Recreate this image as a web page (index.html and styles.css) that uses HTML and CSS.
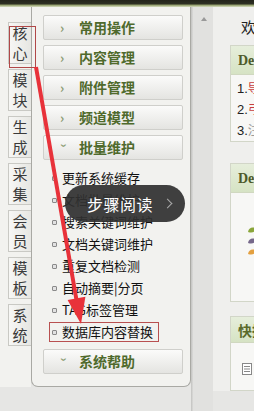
FILE: index.html
```html
<!DOCTYPE html>
<html>
<head>
<meta charset="utf-8">
<link rel="stylesheet" href="styles.css">
</head>
<body>
<div class="topbar"></div>
<div class="main">
  <div class="tabs">
    <div class="tab">核<br>心</div>
    <div class="tab">模<br>块</div>
    <div class="tab">生<br>成</div>
    <div class="tab">采<br>集</div>
    <div class="tab">会<br>员</div>
    <div class="tab">模<br>板</div>
    <div class="tab">系<br>统</div>
  </div>
  <div class="panel">
    <div class="mhead"><span class="arr">›</span>常用操作</div>
    <div class="mhead"><span class="arr">›</span>内容管理</div>
    <div class="mhead"><span class="arr">›</span>附件管理</div>
    <div class="mhead"><span class="arr">›</span>频道模型</div>
    <div class="mhead"><span class="arr down">›</span>批量维护</div>
    <ul class="items">
      <li><span class="dot"></span>更新系统缓存</li>
      <li><span class="dot"></span>文档批量维护</li>
      <li><span class="dot"></span>搜索关键词维护</li>
      <li><span class="dot"></span>文档关键词维护</li>
      <li><span class="dot"></span>重复文档检测</li>
      <li><span class="dot"></span>自动摘要|分页</li>
      <li><span class="dot"></span>TAG标签管理</li>
      <li class="hl"><span class="dot"></span>数据库内容替换</li>
    </ul>
    <div class="mhead"><span class="arr down">›</span>系统帮助</div>
  </div>
  <div class="scroll"><span class="up"></span></div>
  <div class="content">
    <div class="welcome">欢迎使用</div>
    <div class="box box1">
      <div class="bhead">DedeCMS</div>
      <ol class="news">
        <li>1.<span>导</span></li>
        <li>2.<span>弓</span></li>
        <li>3.<span class="g">注</span></li>
      </ol>
    </div>
    <div class="box box2">
      <div class="bhead">DedeCMS</div>
      <div class="bbody">
        <svg class="leaves" width="12" height="30" viewBox="0 0 12 30">
          <path d="M2 6 Q3 0 10 2 Q9 8 2 6Z" fill="#8aa63a"/>
          <path d="M2 17 Q3 11 10 13 Q9 19 2 17Z" fill="#76688a"/>
          <path d="M2 28 Q3 22 10 24 Q9 30 2 28Z" fill="#e3a040"/>
        </svg>
      </div>
    </div>
    <div class="box box3">
      <div class="bhead">快捷</div>
      <div class="bbody">
        <svg class="doc" width="10" height="12" viewBox="0 0 10 12">
          <rect x="0.5" y="0.5" width="9" height="11" fill="#fff" stroke="#888"/>
          <path d="M2 3.5h6M2 6h6M2 8.5h6" stroke="#888"/>
        </svg>
      </div>
    </div>
  </div>
</div>
<div class="mark-tab"></div>
<svg class="arrow" width="254" height="411" viewBox="0 0 254 411">
  <line x1="36" y1="67" x2="76.5" y2="300" stroke="#e8323a" stroke-width="4"/>
  <polygon points="81,324 85.4,296.8 67.6,299.9" fill="#e8323a"/>
</svg>
<div class="reader"><span class="rtext">步骤阅读</span><span class="chev"></span></div>
</body>
</html>
```

FILE: styles.css
```css
* { box-sizing: border-box; }
html, body { margin: 0; padding: 0; }
body {
  width: 254px;
  height: 411px;
  overflow: hidden;
  background: #e6e6e4;
  font-family: "Noto Sans CJK SC", "Liberation Sans", sans-serif;
  position: relative;
}
.topbar {
  height: 7px;
  background: linear-gradient(#23241b 0, #2e3024 4px, #8e9a66 5px, #d6dcc0 7px);
}
.main {
  display: flex;
  height: 404px;
}
.tabs {
  width: 31px;
  padding-top: 15px;
  background: #f2f2ef;
  display: flex;
  flex-direction: column;
  align-items: flex-end;
  height: 380px;
}
.tab {
  width: 23px;
  height: 42px;
  margin-bottom: 5px;
  border: 1px solid #c9c9c4;
  border-right: none;
  background: linear-gradient(90deg, #f7f7f5, #e6e6e2);
  font-size: 15px;
  line-height: 20px;
  text-align: center;
  color: #3a3a3a;
  font-weight: normal;
}
.panel {
  width: 160px;
  height: 380px;
  border: 1px solid #a9a9a4;
  border-top: none;
  border-radius: 0 0 7px 7px;
  background: #f2f2ef;
  padding-top: 8px;
  padding-left: 11px;
}
.mhead {
  width: 140px;
  height: 25px;
  margin-bottom: 5px;
  border: 1px solid #cfcfcb;
  border-radius: 2px;
  background: linear-gradient(#fbfbfa, #e4e4e1);
  font-size: 14px;
  font-weight: bold;
  color: #4f6a2c;
  line-height: 23px;
  padding-left: 16px;
  display: flex;
  align-items: center;
}
.arr {
  display: inline-block;
  width: 19px;
  font-size: 13px;
  color: #8a9a70;
  font-weight: bold;
}
.arr.down { transform: rotate(90deg) translateX(1px); width: 10px; margin-right: 9px; font-size: 12px; }
.items {
  list-style: none;
  margin: 0;
  padding: 2px 0 0 0;
  margin-left: 6px;
  margin-bottom: 7px;
}
.items li {
  height: 22px;
  line-height: 22px;
  font-size: 13px;
  color: #111;
  display: flex;
  align-items: center;
  width: 110px;
  padding-left: 3px;
}
.items li.hl {
  border: 1px solid #b85050;
  height: 20px;
  margin-top: 1px;
  padding-left: 2px;
}
.dot {
  width: 5px;
  height: 5px;
  border: 1px solid #8a8a8a;
  background: #e2e2e2;
  border-radius: 1px;
  margin-right: 5px;
  flex: none;
}
.scroll {
  width: 22px;
  background: linear-gradient(90deg, #c8c8c6 0, #c8c8c6 1px, #e1e1df 2px, #e1e1df 100%);
  height: 404px;
  position: relative;
}
.up {
  position: absolute;
  left: 10px;
  top: 10px;
  width: 0;
  height: 0;
  border-left: 3px solid transparent;
  border-right: 3px solid transparent;
  border-bottom: 4px solid #999;
}
.content {
  flex: 1;
  background: #efefed;
  padding-top: 10px;
  padding-left: 17px;
  overflow: hidden;
  height: 384px;
}
.welcome {
  height: 20px;
  line-height: 20px;
  font-size: 15px;
  padding-left: 11px;
  white-space: nowrap;
  color: #222;
}
.box {
  width: 60px;
  border: 1px solid #d2d6c8;
  border-right: none;
  background: #f7f7f5;
}
.box1 { margin-top: 8px; height: 97px; }
.box2 { margin-top: 21px; height: 139px; }
.box3 { margin-top: 14px; height: 75px; }
.bhead {
  height: 29px;
  background: linear-gradient(#e6eedb, #d6e3c4);
  border-bottom: 1px solid #d0d8c0;
  font-family: "Liberation Serif", serif;
  font-weight: bold;
  font-size: 14px;
  color: #4d5a2a;
  line-height: 29px;
  padding-left: 7px;
  white-space: nowrap;
}
.box3 .bhead {
  height: 26px;
  line-height: 26px;
  font-family: "Noto Sans CJK SC", sans-serif;
  color: #5a6a2a;
}
.news {
  list-style: none;
  margin: 0;
  padding: 3px 0 0 6px;
  font-size: 13px;
  line-height: 20px;
  color: #222;
  font-family: "Liberation Sans", sans-serif;
}
.news span { color: #c84040; font-family: "Noto Sans CJK SC", sans-serif; font-size: 12px; }
.news span.g { color: #999; }
.bbody { position: relative; height: 100%; }
.leaves { position: absolute; left: 15px; top: 33px; }
.doc { position: absolute; left: 11px; top: 20px; }
.mark-tab {
  position: absolute;
  left: 9px;
  top: 26px;
  width: 27px;
  height: 42px;
  border: 1px solid #b04848;
}
.arrow {
  position: absolute;
  left: 0;
  top: 0;
  pointer-events: none;
}
.reader {
  position: absolute;
  left: 65px;
  top: 185px;
  width: 120px;
  height: 37px;
  border-radius: 19px;
  background: rgba(48, 48, 48, 0.92);
  color: #fff;
  display: flex;
  align-items: center;
  padding-left: 22px;
}
.rtext {
  font-size: 16px;
  letter-spacing: 0.5px;
}
.chev {
  width: 7px;
  height: 7px;
  border-top: 1px solid #aaa;
  border-right: 1px solid #aaa;
  transform: rotate(45deg);
  margin-left: 11px;
}
```
